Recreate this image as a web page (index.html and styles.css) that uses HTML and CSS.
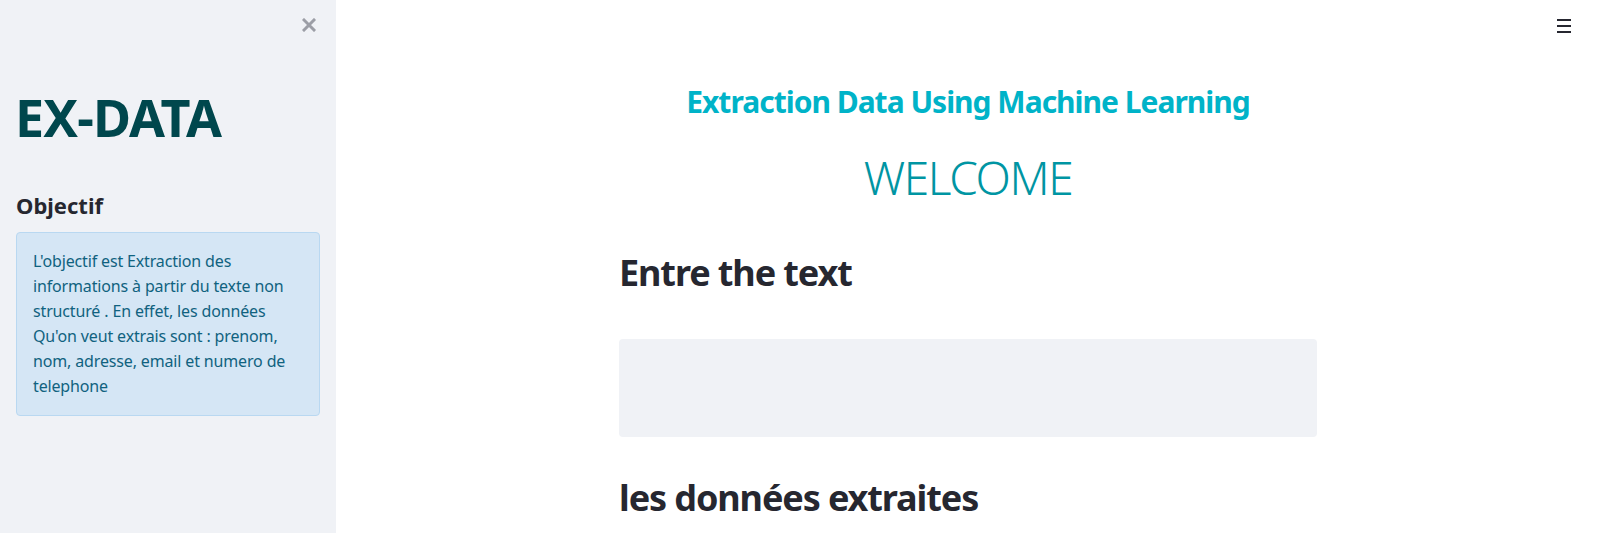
FILE: index.html
```html
<!DOCTYPE html>
<html lang="fr">
<head>
<meta charset="utf-8">
<title>EX-DATA</title>
<link rel="stylesheet" href="styles.css">
</head>
<body>
<div class="app">
  <aside class="sidebar">
    <button class="close-btn" aria-label="Close sidebar">
      <svg width="14" height="14" viewBox="0 0 14 14"><path d="M2 2 L12 12 M12 2 L2 12" stroke="#9c9ea6" stroke-width="3" stroke-linecap="square"/></svg>
    </button>
    <h1 class="brand">EX-DATA</h1>
    <h3 class="side-heading">Objectif</h3>
    <div class="info-box">L'objectif est Extraction des informations à partir du texte non structuré . En effet, les données Qu'on veut extrais sont : prenom, nom, adresse, email et numero de telephone</div>
  </aside>
  <main class="main">
    <button class="menu-btn" aria-label="Menu">
      <span></span><span></span><span></span>
    </button>
    <div class="block">
      <h2 class="app-title">Extraction Data Using Machine Learning</h2>
      <p class="welcome">WELCOME</p>
      <h2 class="section-heading">Entre the text</h2>
      <textarea class="text-input"></textarea>
      <h2 class="section-heading section-heading--result">les données extraites</h2>
    </div>
  </main>
</div>
</body>
</html>
```

FILE: styles.css
```css
* { box-sizing: border-box; }
html, body { margin: 0; padding: 0; }
body {
  font-family: "Noto Sans", "DejaVu Sans", sans-serif;
  color: #262730;
  background: #ffffff;
  height: 533px;
  overflow: hidden;
}
.app {
  display: flex;
  height: 533px;
}
.sidebar {
  position: relative;
  width: 336px;
  flex: 0 0 336px;
  background: #f0f2f6;
  padding: 86px 16px 0 16px;
}
.close-btn {
  position: absolute;
  top: 18px;
  left: 302px;
  width: 14px;
  height: 14px;
  padding: 0;
  border: 0;
  background: none;
  display: block;
}
.close-btn svg { display: block; }
.brand {
  margin: 0 0 0 -1px;
  font-size: 52px;
  line-height: 62px;
  font-weight: 700;
  letter-spacing: -0.9px;
  color: #00474d;
}
.side-heading {
  margin: 43px 0 0 0;
  font-size: 22px;
  line-height: 28px;
  font-weight: 700;
  color: #262730;
}
.info-box {
  margin-top: 13px;
  width: 304px;
  background: #d5e6f5;
  border: 1px solid #b9d8f1;
  border-radius: 4px;
  padding: 16px 24px 16px 16px;
  font-size: 16px;
  line-height: 25px;
  letter-spacing: -0.15px;
  color: #10627f;
}
.main {
  position: relative;
  flex: 1;
  display: flex;
  justify-content: center;
}
.menu-btn {
  position: absolute;
  top: 19px;
  right: 29px;
  width: 14px;
  height: 14px;
  padding: 0;
  border: 0;
  background: none;
  display: flex;
  flex-direction: column;
  justify-content: space-between;
}
.menu-btn span {
  display: block;
  height: 2px;
  width: 14px;
  background: #262730;
}
.block {
  width: 698px;
  padding-top: 84px;
}
.app-title {
  margin: 0;
  text-align: center;
  font-size: 30px;
  line-height: 36px;
  font-weight: 700;
  letter-spacing: -1px;
  color: #00b3c8;
}
.welcome {
  margin: 29px 0 0 0;
  text-align: center;
  font-size: 46px;
  line-height: 56px;
  font-weight: 300;
  letter-spacing: -1.4px;
  color: #0095a3;
}
.section-heading {
  margin: 46px 0 0 0;
  font-size: 36px;
  line-height: 44px;
  font-weight: 700;
  letter-spacing: -1.1px;
  color: #262730;
}
.text-input {
  display: block;
  margin-top: 44px;
  width: 100%;
  height: 98px;
  background: #f0f2f6;
  border: 0;
  border-radius: 4px;
  resize: none;
  outline: none;
}
.section-heading--result {
  margin-top: 39px;
}
```
